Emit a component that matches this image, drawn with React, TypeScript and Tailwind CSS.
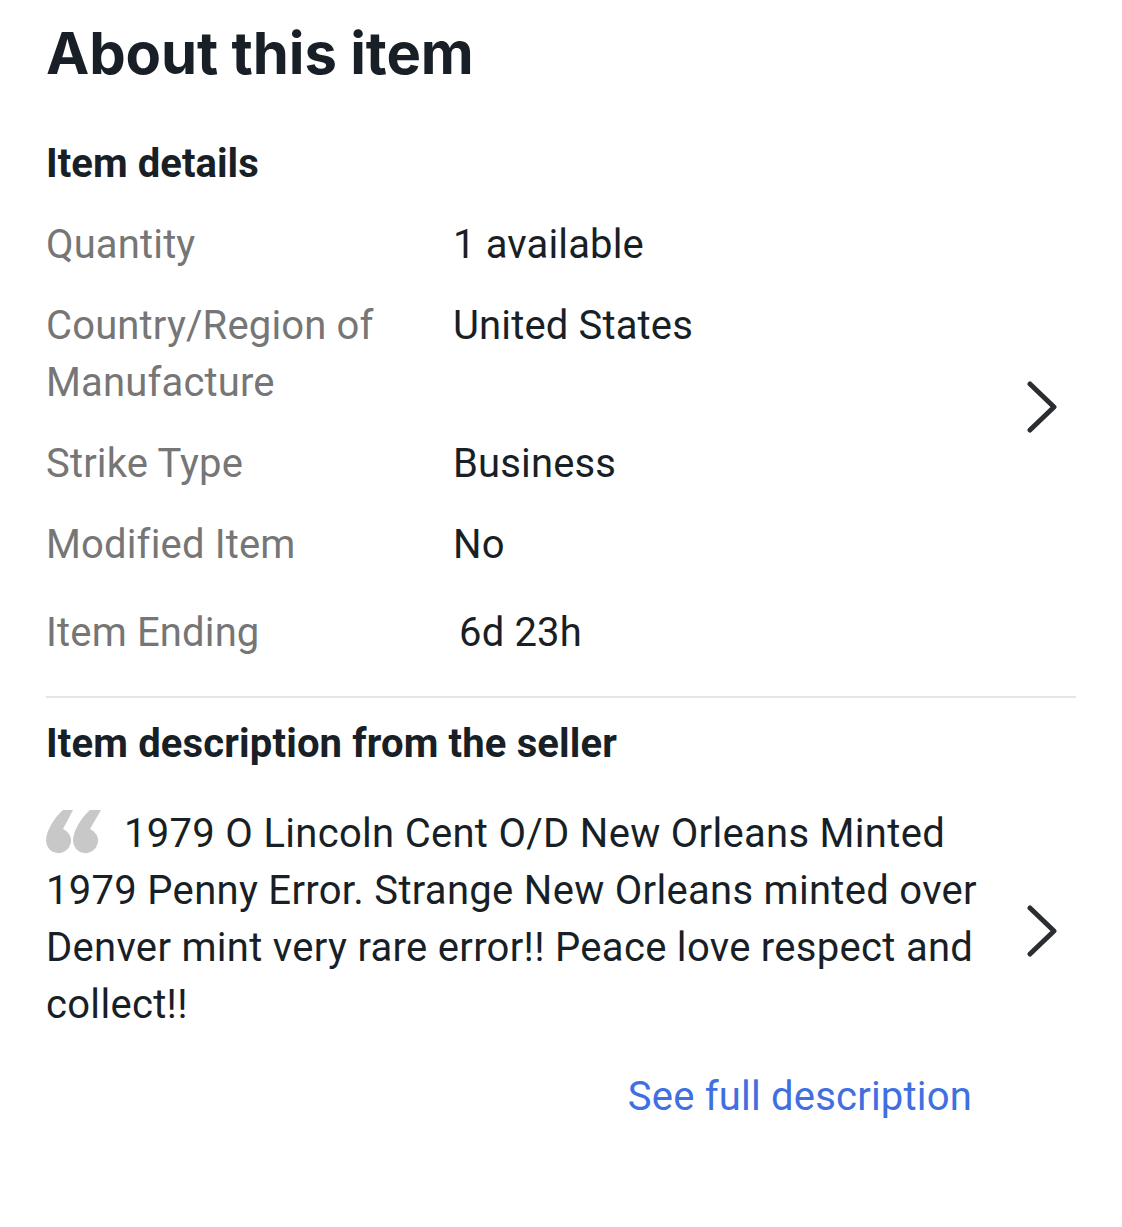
import React from 'react';

const rows = [
  { label: 'Quantity', value: '1 available' },
  { label: 'Country/Region of Manufacture', value: 'United States' },
  { label: 'Strike Type', value: 'Business' },
  { label: 'Modified Item', value: 'No' },
];

const Chevron = () => (
  <svg className="shrink-0 mr-[18px]" width="32" height="52" viewBox="0 0 32 52" fill="none" stroke="#2a2e33" strokeWidth="5" strokeLinecap="round" strokeLinejoin="round">
    <path d="M4 3l24 23L4 49" />
  </svg>
);

const QuoteMark = () => (
  <svg className="inline-block align-[-7px] mr-[22px]" width="56" height="44" viewBox="0 0 56 44" fill="#c8c8c8">
    <path d="M0 31C0 21 8 8 17 0h10L17 19a12.5 12.5 0 1 1-17 12z" />
    <path d="M27 31C27 21 35 8 44 0h11L44 19a12.5 12.5 0 1 1-17 12z" />
  </svg>
);

const App: React.FC = () => {
  return (
    <div className="w-[1122px] h-[1227px] bg-white px-[46px] text-[#191f26] font-['Roboto',sans-serif] overflow-hidden">
      <h1 className="pt-[20px] text-[58px] leading-[66px] font-bold font-['Inter',sans-serif] tracking-[-0.15px]">About this item</h1>

      {/* Item details */}
      <div className="mt-[55px] flex items-center justify-between">
        <div className="flex-1 pb-[11px]">
          <h2 className="text-[40px] leading-[46px] font-bold tracking-[0.05px]">Item details</h2>
          <div className="mt-[29px] flex flex-col gap-[24px] text-[40px] leading-[57px] tracking-[0.15px]">
            {rows.map((r) => (
              <div key={r.label} className="flex">
                <div className="w-[407px] text-[#767676]">{r.label}</div>
                <div>{r.value}</div>
              </div>
            ))}
            <div className="flex mt-[7px]">
              <div className="w-[413px] text-[#767676]">Item Ending</div>
              <div>6d 23h</div>
            </div>
          </div>
        </div>
        <Chevron />
      </div>

      <div className="mt-[24px] h-[2px] bg-[#e5e5e5]" />

      {/* Seller description */}
      <div className="mt-[23px] flex items-center justify-between">
        <div className="flex-1 pb-[16px]">
          <h2 className="text-[40px] leading-[46px] font-bold tracking-[0.15px]">Item description from the seller</h2>
          <p className="mt-[38px] w-[950px] text-[40px] leading-[57px] tracking-[0.3px]">
            <QuoteMark />
            1979 O Lincoln Cent O/D New Orleans Minted 1979 Penny Error. Strange New Orleans minted over Denver mint very rare error!! Peace love respect and collect!!
          </p>
          <div className="mt-[35px] w-[926px] text-right text-[40px] leading-[57px] tracking-[0.2px] text-[#3f6fe0]">See full description</div>
        </div>
        <Chevron />
      </div>
    </div>
  );
};

export default App;
